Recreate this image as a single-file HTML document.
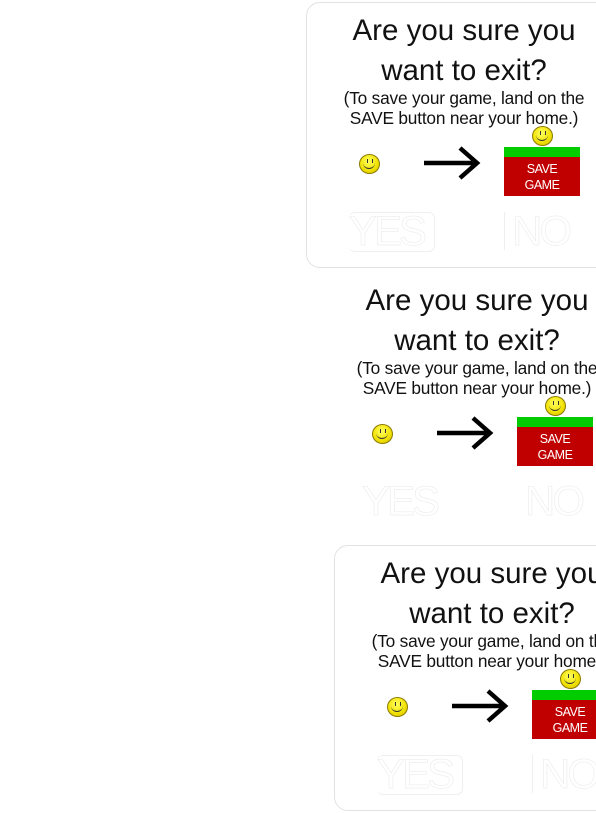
<!DOCTYPE html>
<html><head><style>
html,body{margin:0;padding:0;width:596px;height:813px;overflow:hidden;background:#fff;position:relative;font-family:"Liberation Sans",sans-serif}
.p{position:absolute;width:320px;height:266px;box-sizing:border-box;border-radius:14px}
.b{border:1px solid #e2e2e2}
.p>*{position:absolute}
.t{left:0;width:314px;text-align:center;font-size:29.5px;line-height:40px;color:#111;top:8px;white-space:nowrap}
.s{left:0;width:314px;text-align:center;font-size:17.3px;line-height:20px;color:#111;top:85px;white-space:nowrap;letter-spacing:-0.2px}
.sm{width:21px;height:20px;border-radius:50%;background:radial-gradient(circle at 45% 35%,#ffff60,#f0e000 60%,#c8b000);border:1px solid #8a7a00;box-sizing:border-box}
.sm::after{content:"";position:absolute;left:3px;top:6px;width:12px;height:7px;border-bottom:1.5px solid #333;border-radius:0 0 8px 8px}
.sm::before{content:"";position:absolute;left:7px;top:4px;width:1px;height:4px;background:#333;box-shadow:5px 0 #333}
.g{left:197px;top:144px;width:76px;height:10px;background:#00cc00}
.r{left:197px;top:154px;width:76px;height:39px;background:#c00000;color:#fff;font-size:12.5px;line-height:16px;text-align:center;padding-top:4px;box-sizing:border-box;letter-spacing:-0.5px}
.y{font-size:42px;color:#fff;-webkit-text-stroke:0.5px #e8e8e8;top:204px;letter-spacing:-3px}
.yb{left:42px;top:209px;width:85px;height:38px;border:1px solid #efefef;border-left:none;border-radius:6px}
.nb{left:197px;top:209px;width:120px;height:38px;border-left:1px solid #efefef}
</style></head><body>

<div class="p b" style="left:306px;top:2px">
<div class="t">Are you sure you<br>want to exit?</div>
<div class="s">(To save your game, land on the<br>SAVE button near your home.)</div>
<div class="sm" style="left:52px;top:151px"></div>
<svg style="left:115px;top:142px" width="60" height="36"><path d="M2 18H54M38 3L55 18L38 33" stroke="#000" stroke-width="4.5" fill="none"/></svg>
<div class="g"></div><div class="r">SAVE<br>GAME</div>
<div class="sm" style="left:225px;top:123px"></div>
<div class="yb"></div><div class="nb"></div>
<div class="y" style="left:42px">YES</div>
<div class="y" style="left:205px">NO</div>
</div>

<div class="p" style="left:320px;top:273px">
<div class="t">Are you sure you<br>want to exit?</div>
<div class="s">(To save your game, land on the<br>SAVE button near your home.)</div>
<div class="sm" style="left:52px;top:151px"></div>
<svg style="left:115px;top:142px" width="60" height="36"><path d="M2 18H54M38 3L55 18L38 33" stroke="#000" stroke-width="4.5" fill="none"/></svg>
<div class="g"></div><div class="r">SAVE<br>GAME</div>
<div class="sm" style="left:225px;top:123px"></div>
<div class="y" style="left:42px">YES</div>
<div class="y" style="left:205px">NO</div>
</div>

<div class="p b" style="left:334px;top:545px">
<div class="t">Are you sure you<br>want to exit?</div>
<div class="s">(To save your game, land on the<br>SAVE button near your home.)</div>
<div class="sm" style="left:52px;top:151px"></div>
<svg style="left:115px;top:142px" width="60" height="36"><path d="M2 18H54M38 3L55 18L38 33" stroke="#000" stroke-width="4.5" fill="none"/></svg>
<div class="g"></div><div class="r">SAVE<br>GAME</div>
<div class="sm" style="left:225px;top:123px"></div>
<div class="yb"></div><div class="nb"></div>
<div class="y" style="left:42px">YES</div>
<div class="y" style="left:205px">NO</div>
</div>
</body></html>
